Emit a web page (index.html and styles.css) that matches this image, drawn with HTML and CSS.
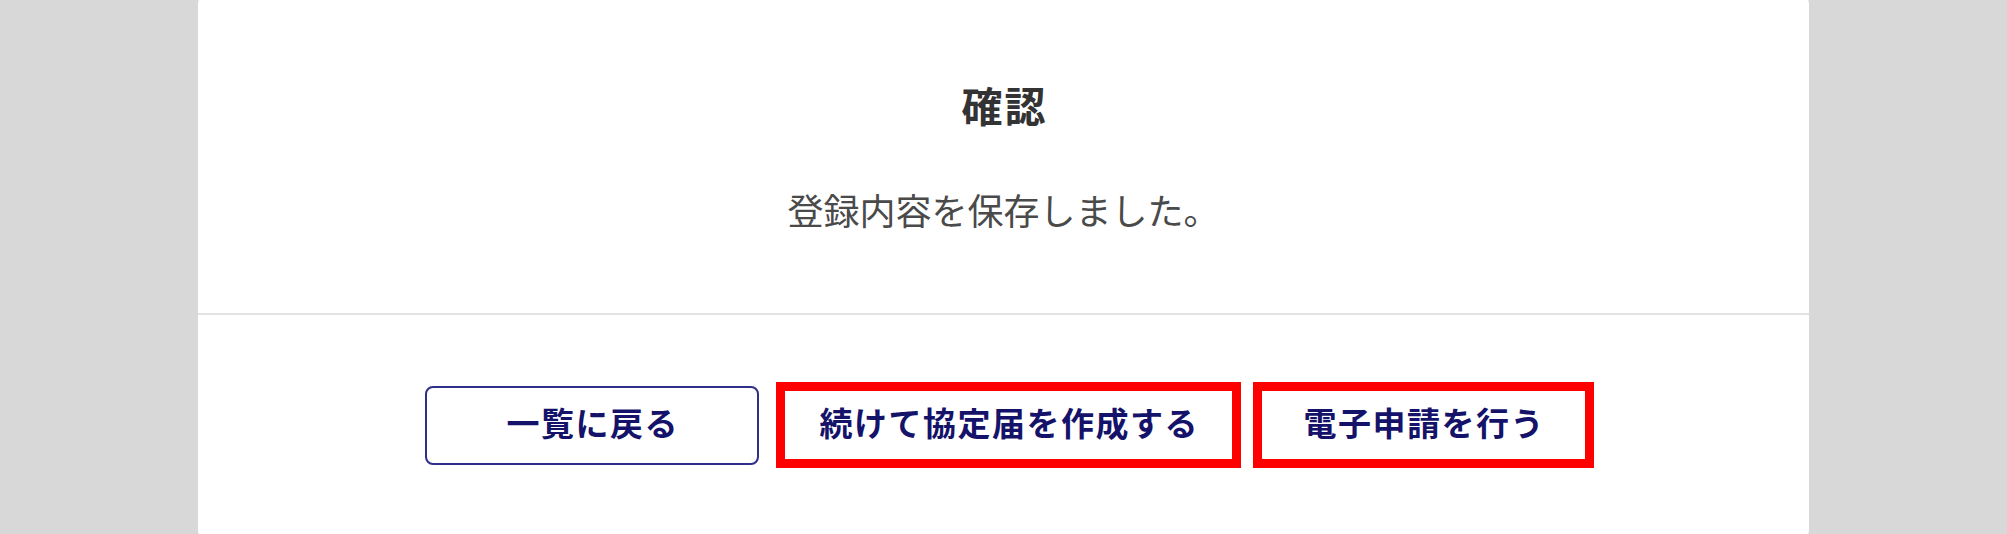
FILE: index.html
```html
<!DOCTYPE html>
<html lang="ja">
<head>
<meta charset="utf-8">
<title>確認</title>
<link rel="stylesheet" href="styles.css">
</head>
<body>
<div class="dialog">
  <div class="dialog-body">
    <h1 class="dialog-title">確認</h1>
    <p class="dialog-message">登録内容を保存しました。</p>
  </div>
  <div class="dialog-footer">
    <button class="btn btn-outline">一覧に戻る</button>
    <button class="btn btn-marked btn-wide">続けて協定届を作成する</button>
    <button class="btn btn-marked btn-mid">電子申請を行う</button>
  </div>
</div>
</body>
</html>
```

FILE: styles.css
```css
* {
  box-sizing: border-box;
}

html, body {
  margin: 0;
  padding: 0;
}

body {
  background: #d8d8d8;
  font-family: "Noto Sans CJK JP", "Noto Sans", sans-serif;
  height: 534px;
  overflow: hidden;
}

.dialog {
  width: 1611px;
  height: 546px;
  margin: -6px auto 0;
  background: #ffffff;
  border-radius: 10px;
  display: flex;
  flex-direction: column;
}

.dialog-body {
  height: 321px;
  padding-top: 90px;
  border-bottom: 2px solid #e3e3e3;
  display: flex;
  flex-direction: column;
  align-items: center;
}

.dialog-title {
  margin: 0;
  font-size: 41px;
  line-height: 41px;
  font-weight: 700;
  color: #333333;
  letter-spacing: 2px;
  padding-left: 2px;
}

.dialog-message {
  margin: 66px 0 0;
  font-size: 36px;
  line-height: 36px;
  font-weight: 400;
  color: #4a4a4a;
}

.dialog-footer {
  padding: 67px 0 0 12px;
  display: flex;
  justify-content: center;
  align-items: center;
  gap: 12px;
}

.btn {
  font-family: "Noto Sans CJK JP", "Noto Sans", sans-serif;
  font-size: 33px;
  font-weight: 700;
  letter-spacing: 1.5px;
  color: #15126a;
  background: #ffffff;
  display: flex;
  align-items: center;
  justify-content: center;
  padding: 0 0 6px 1.5px;
  line-height: 1;
  cursor: pointer;
}

.btn-outline {
  width: 334px;
  height: 79px;
  border: 2px solid #2e2f86;
  border-radius: 8px;
  margin-right: 5px;
}

.btn-marked {
  height: 86px;
  border: 9px solid #ff0000;
  border-radius: 0;
}

.btn-wide {
  width: 465px;
}

.btn-mid {
  width: 341px;
}
```
